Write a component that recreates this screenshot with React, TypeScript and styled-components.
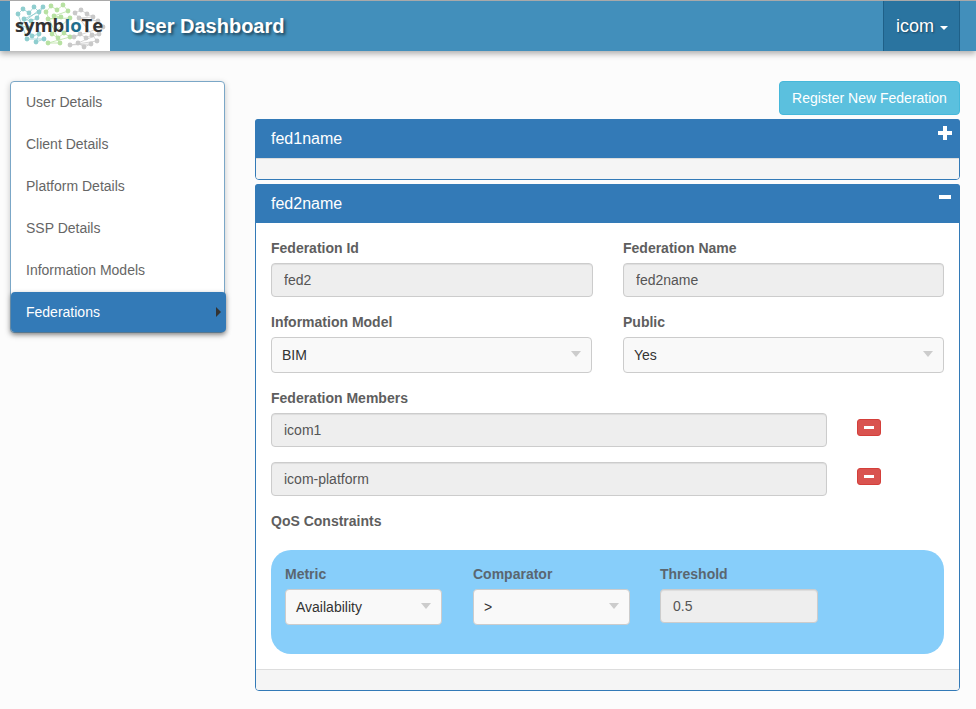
import React from 'react';
import styled, { createGlobalStyle } from 'styled-components';

const GlobalStyle = createGlobalStyle`
    * { box-sizing: border-box; }
    html, body { margin: 0; padding: 0; }
    body {
        background: #fcfcfc;
        color: #333;
        font-family: "Liberation Sans", Arial, sans-serif;
        font-size: 14px;
        line-height: 20px;
    }
`;

const Page = styled.div`
    width: 976px;
    height: 709px;
    overflow: hidden;
`;

const Navbar = styled.header`
    display: flex;
    align-items: stretch;
    height: 51px;
    padding: 0 16px 0 10px;
    border-top: 1px solid #a9a9a9;
    background: #428fbb;
    box-shadow: 0 3px 6px rgba(0, 0, 0, 0.3);
`;

const LogoBox = styled.div`
    position: relative;
    width: 100px;
    height: 50px;
    background: #fff;
    overflow: hidden;
`;

const LogoNetwork = styled.svg`
    display: block;
    opacity: 0.8;
    filter: blur(0.6px);
`;

const LogoText = styled.span`
    position: absolute;
    left: 5px;
    top: 10px;
    font-family: "Open Sans", sans-serif;
    font-size: 18.5px;
    line-height: 28px;
    font-weight: 700;
    letter-spacing: -0.1px;
    white-space: nowrap;
    color: #333;

    b {
        font-weight: 700;
        color: #1f6d8c;
    }
`;

const Brand = styled.div`
    margin-left: 20px;
    flex: 1;
    color: #fff;
    font-size: 20px;
    font-weight: bold;
    line-height: 50px;
    text-shadow: 2px 2px 3px rgba(0, 0, 0, 0.55);
`;

const UserMenu = styled.div`
    display: flex;
    align-items: center;
    gap: 6px;
    width: 77px;
    height: 50px;
    padding-left: 12px;
    background: #2a74a0;
    border-left: 1px solid #1f6088;
    border-right: 1px solid #1f6088;
    color: #fff;
    font-size: 18px;
    text-shadow: 1px 1px 2px rgba(0, 0, 0, 0.4);
`;

const Caret = styled.span`
    width: 0;
    height: 0;
    margin-top: 3px;
    border-top: 4px solid #fff;
    border-left: 4px solid transparent;
    border-right: 4px solid transparent;
`;

const Content = styled.div`
    display: flex;
    align-items: flex-start;
    gap: 30px;
    padding: 30px 16px 0 10px;
`;

const Sidebar = styled.nav`
    display: flex;
    flex-direction: column;
    width: 215px;
    height: 252px;
    flex: none;
    background: #fff;
    border: 1px solid #7ba7c7;
    border-radius: 4px;
    box-shadow: 0 2px 6px rgba(0, 0, 0, 0.22);
`;

const SideItem = styled.div<{ $first?: boolean }>`
    height: ${p => (p.$first ? '41px' : '42px')};
    padding-left: 15px;
    line-height: ${p => (p.$first ? '40px' : '42px')};
    color: #666;
`;

const ActiveItem = styled.div`
    position: relative;
    width: 215px;
    height: 41px;
    margin-top: 1px;
    padding-left: 15px;
    line-height: 40px;
    color: #fff;
    background: #337ab7;
    border-radius: 4px;
    box-shadow: 0 2px 5px rgba(0, 0, 0, 0.4);
`;

const SideArrow = styled.span`
    position: absolute;
    right: 5px;
    top: 15px;
    width: 0;
    height: 0;
    border-left: 5px solid #333;
    border-top: 5px solid transparent;
    border-bottom: 5px solid transparent;
`;

const Main = styled.main`
    flex: 1;
    display: flex;
    flex-direction: column;
    min-width: 0;
`;

const Toolbar = styled.div`
    display: flex;
    justify-content: flex-end;
    margin-bottom: 4px;
`;

const RegisterButton = styled.button`
    height: 34px;
    width: 181px;
    padding: 0;
    font: inherit;
    color: #fff;
    background: #5bc0de;
    border: 1px solid #46b8da;
    border-radius: 4px;
`;

const Panel = styled.section`
    margin-bottom: 4px;
    border: 1px solid #337ab7;
    border-radius: 4px;
    background: #fff;
`;

const PanelHeader = styled.div`
    position: relative;
    margin: -1px -1px 0;
    height: 39px;
    padding: 9px 16px;
    background: #337ab7;
    color: #fff;
    font-size: 16px;
    line-height: 21px;
    border-radius: 3px 3px 0 0;
`;

const ToggleIcon = styled.svg<{ $top: number }>`
    position: absolute;
    right: 8px;
    top: ${p => p.$top}px;
    width: 14px;
    height: 14px;
    fill: #fff;
`;

const PanelBody = styled.div`
    padding: 16px 15px 15px;
`;

const PanelFooter = styled.div`
    height: 21px;
    background: #f5f5f5;
    border-top: 1px solid #ddd;
    border-radius: 0 0 3px 3px;
`;

const Row = styled.div`
    display: grid;
    grid-template-columns: 322px 321px;
    gap: 30px;
    margin-bottom: 16px;
`;

const Field = styled.div`
    display: flex;
    flex-direction: column;
`;

const Label = styled.label`
    display: block;
    height: 20px;
    margin-bottom: 4px;
    font-weight: bold;
    color: #5e5e5e;
    line-height: 18px;
`;

const TextInput = styled.input`
    display: block;
    width: 100%;
    height: 34px;
    padding: 6px 12px;
    font: inherit;
    color: #555;
    background: #eee;
    border: 1px solid #ccc;
    border-radius: 4px;
    box-shadow: inset 0 1px 1px rgba(0, 0, 0, 0.075);
    outline: none;
`;

const SelectBox = styled.div`
    position: relative;
    width: 321px;
    height: 36px;
    padding: 0 10px;
    line-height: 35px;
    background: #f9f9f9;
    border: 1px solid #ccc;
    border-radius: 4px;
    color: #333;

    &::after {
        content: '';
        position: absolute;
        right: 10px;
        top: 13px;
        border-top: 6px solid #ccc;
        border-left: 5px solid transparent;
        border-right: 5px solid transparent;
    }
`;

const MemberRow = styled.div`
    display: flex;
    align-items: flex-start;
    gap: 30px;
    margin-bottom: 15px;
`;

const MemberInput = styled(TextInput)`
    width: 556px;
`;

const RemoveButton = styled.button`
    display: flex;
    align-items: center;
    justify-content: center;
    width: 24px;
    height: 17px;
    margin-top: 6px;
    padding: 0;
    background: #d9534f;
    border: 1px solid #d43f3a;
    border-radius: 3px;
`;

const MinusBar = styled.span`
    display: block;
    width: 10px;
    height: 3px;
    background: #fff;
`;

const QosTitle = styled(Label)`
    margin: 0 0 19px;
    line-height: 20px;
`;

const QosBox = styled.div`
    display: grid;
    grid-template-columns: 188px 187px 158px;
    height: 104px;
    padding: 15px 14px;
    background: #87cefa;
    border-radius: 20px;
`;

const QosSelect = styled(SelectBox)`
    width: 157px;
`;

const QosLabel = styled(Label)`
    color: #5a6670;
`;

const members = ['icom1', 'icom-platform'];
const menu = ['User Details', 'Client Details', 'Platform Details', 'SSP Details', 'Information Models'];

const clusters = [
    {
        color: '#74c2c4',
        nodes: [[8, 13], [13, 8], [19, 12], [24, 6], [29, 11], [14, 18], [21, 20], [27, 17], [33, 6], [10, 24], [18, 27], [22, 35], [29, 33], [26, 41], [34, 38], [17, 38]],
    },
    {
        color: '#a6da8c',
        nodes: [[36, 11], [41, 5], [47, 9], [53, 4], [58, 10], [44, 15], [51, 16], [38, 18], [60, 17], [42, 33], [48, 37], [54, 32], [60, 36], [38, 42], [50, 42]],
    },
    {
        color: '#bcbcbc',
        nodes: [[65, 12], [71, 9], [77, 13], [83, 16], [69, 17], [88, 20], [93, 26], [64, 36], [70, 33], [76, 37], [82, 34], [89, 33], [68, 42], [74, 46], [81, 43], [60, 44], [87, 40]],
    },
];

const Logo = () => (
    <LogoBox>
        <LogoNetwork width="100" height="50" viewBox="0 0 100 50">
            {clusters.map(c => (
                <g key={c.color}>
                    {c.nodes.map(([x, y], i) => {
                        const [nx, ny] = c.nodes[(i + 1) % c.nodes.length];
                        return (
                            <g key={i}>
                                <line x1={x} y1={y} x2={nx} y2={ny} stroke={c.color} strokeWidth="0.8" />
                                <circle cx={x} cy={y} r="2.4" fill={c.color} />
                            </g>
                        );
                    })}
                </g>
            ))}
        </LogoNetwork>
        <LogoText>symb<b>Io</b>Te</LogoText>
    </LogoBox>
);

const App = () => (
    <Page>
        <GlobalStyle />
        <Navbar>
            <Logo />
            <Brand>User Dashboard</Brand>
            <UserMenu>icom<Caret /></UserMenu>
        </Navbar>
        <Content>
            <Sidebar>
                {menu.map((item, i) => (
                    <SideItem key={item} $first={i === 0}>{item}</SideItem>
                ))}
                <ActiveItem>Federations<SideArrow /></ActiveItem>
            </Sidebar>
            <Main>
                <Toolbar>
                    <RegisterButton>Register New Federation</RegisterButton>
                </Toolbar>
                <Panel>
                    <PanelHeader>
                        fed1name
                        <ToggleIcon $top={7} viewBox="0 0 14 14"><path d="M5 0h4v5h5v4H9v5H5V9H0V5h5z" /></ToggleIcon>
                    </PanelHeader>
                    <PanelFooter />
                </Panel>
                <Panel>
                    <PanelHeader>
                        fed2name
                        <ToggleIcon $top={6} viewBox="0 0 14 14"><path d="M1 5h12v4H1z" /></ToggleIcon>
                    </PanelHeader>
                    <PanelBody>
                        <Row>
                            <Field>
                                <Label>Federation Id</Label>
                                <TextInput readOnly value="fed2" />
                            </Field>
                            <Field>
                                <Label>Federation Name</Label>
                                <TextInput readOnly value="fed2name" />
                            </Field>
                        </Row>
                        <Row>
                            <Field>
                                <Label>Information Model</Label>
                                <SelectBox>BIM</SelectBox>
                            </Field>
                            <Field>
                                <Label>Public</Label>
                                <SelectBox>Yes</SelectBox>
                            </Field>
                        </Row>
                        <Label>Federation Members</Label>
                        {members.map(m => (
                            <MemberRow key={m}>
                                <MemberInput readOnly value={m} />
                                <RemoveButton><MinusBar /></RemoveButton>
                            </MemberRow>
                        ))}
                        <QosTitle>QoS Constraints</QosTitle>
                        <QosBox>
                            <Field>
                                <QosLabel>Metric</QosLabel>
                                <QosSelect>Availability</QosSelect>
                            </Field>
                            <Field>
                                <QosLabel>Comparator</QosLabel>
                                <QosSelect>&gt;</QosSelect>
                            </Field>
                            <Field>
                                <QosLabel>Threshold</QosLabel>
                                <TextInput readOnly value="0.5" />
                            </Field>
                        </QosBox>
                    </PanelBody>
                    <PanelFooter />
                </Panel>
            </Main>
        </Content>
    </Page>
);

export default App;
